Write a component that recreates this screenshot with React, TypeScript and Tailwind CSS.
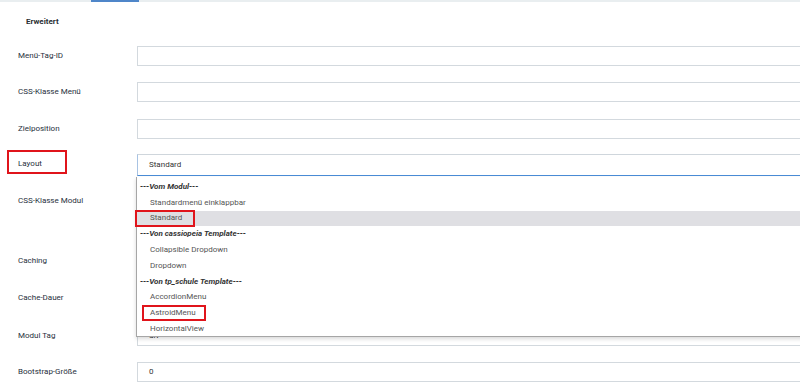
import React from "react";

type Row = { label: string; h: string; value?: string; focused?: boolean };

const rows: Row[] = [
  { label: "Menü-Tag-ID", h: "h-[36px]" },
  { label: "CSS-Klasse Menü", h: "h-[37px]" },
  { label: "Zielposition", h: "h-[35px]" },
  { label: "Layout", h: "h-[37px]", value: "Standard", focused: true },
  { label: "CSS-Klasse Modul", h: "h-[60px]" },
  { label: "Caching", h: "h-[37px]" },
  { label: "Cache-Dauer", h: "h-[38px]" },
  { label: "Modul Tag", h: "h-[36px]", value: "div" },
  { label: "Bootstrap-Größe", h: "h-[36px]", value: "0" },
];

type Opt = { text: string; header?: boolean; active?: boolean };
const options: Opt[] = [
  { text: "---Vom Modul---", header: true },
  { text: "Standardmenü einklappbar" },
  { text: "Standard", active: true },
  { text: "---Von cassiopeia Template---", header: true },
  { text: "Collapsible Dropdown" },
  { text: "Dropdown" },
  { text: "---Von tp_schule Template---", header: true },
  { text: "AccordionMenu" },
  { text: "AstroidMenu" },
  { text: "HorizontalView" },
];

export default function App() {
  return (
    <div
      className="relative w-[800px] h-[385px] overflow-hidden bg-white"
      style={{ fontFamily: "Roboto, 'Liberation Sans', sans-serif" }}
    >
      {/* tab bar */}
      <div className="h-[2px] bg-[#e9eef0] flex">
        <div className="ml-[91px] w-[48px] h-[2px] bg-[#4f86c9]" />
      </div>
      {/* heading */}
      <div className="h-[44px] flex items-start pt-[14px] pl-[26px]">
        <span className="text-[8px] font-bold text-[#2b2f33] leading-[12px]">Erweitert</span>
      </div>
      {/* rows */}
      <div className="flex flex-col">
        {rows.map((r) => (
          <div key={r.label} className={`${r.h} flex items-start`}>
            <div className="w-[137px] shrink-0 pl-[18px] h-[20px] flex items-center text-[8px] text-[#1f2f3c]">
              {r.label}
            </div>
            <div
              className={
                r.focused
                  ? "w-[680px] shrink-0 h-[22px] border border-[#cfd6dc] border-b-[#4a8cd6] border-l-[#a8c3e3] flex items-center pl-[11px] text-[8px] text-[#333]"
                  : "w-[680px] shrink-0 h-[20px] border border-[#d3d9de] flex items-center pl-[11px] text-[8px] text-[#333]"
              }
            >
              {r.value}
            </div>
          </div>
        ))}
      </div>

      {/* dropdown list */}
      <div className="absolute left-[136px] top-[177px] w-[700px] h-[160px] bg-white border-l border-b border-[#a6a6a6] shadow-[0_2px_4px_rgba(0,0,0,0.15)] pt-[2px] z-10">
        {options.map((o) => (
          <div
            key={o.text}
            className={`h-[15.8px] flex items-center text-[8px] ${
              o.header
                ? "pl-[3px] font-bold italic text-[#333]"
                : "pl-[13px] text-[#555]"
            } ${o.active ? "bg-[#dfdfe3]" : ""}`}
          >
            {o.text}
          </div>
        ))}
      </div>

      {/* red annotation boxes */}
      <div className="absolute left-[7px] top-[150px] w-[60px] h-[24px] border-2 border-[#e0141b] z-20" />
      <div className="absolute left-[135px] top-[210px] w-[60px] h-[17px] border-2 border-[#e0141b] z-20" />
      <div className="absolute left-[142px] top-[305px] w-[64px] h-[16px] border-2 border-[#e0141b] z-20" />
    </div>
  );
}
